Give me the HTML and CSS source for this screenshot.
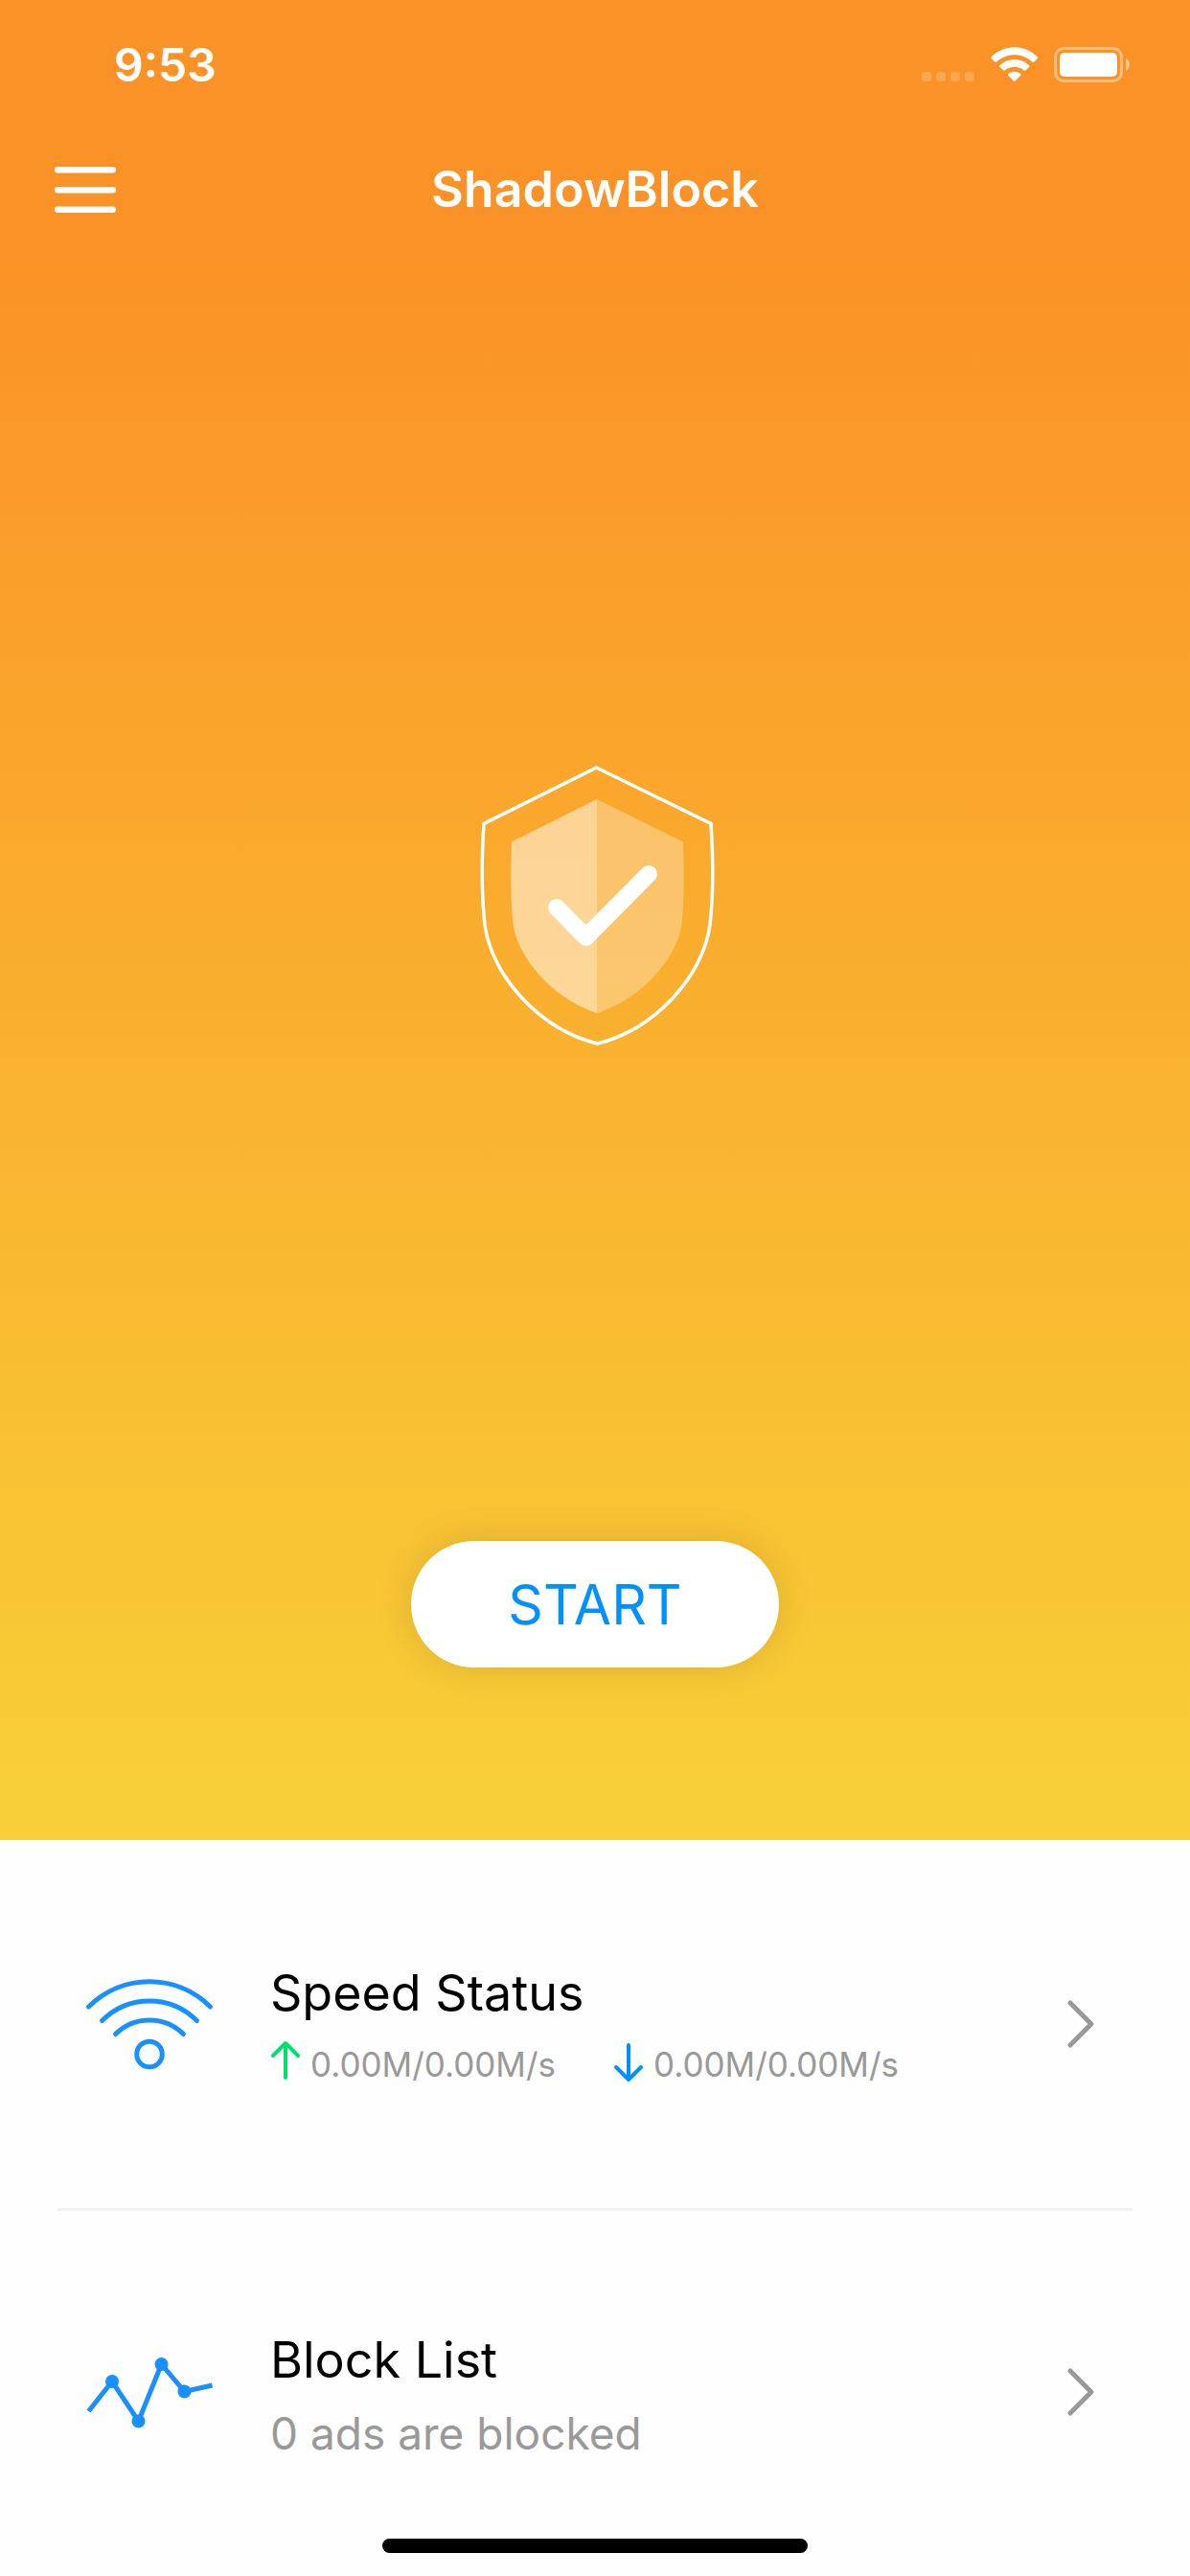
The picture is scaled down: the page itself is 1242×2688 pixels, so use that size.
FILE: index.html
```html
<!DOCTYPE html>
<html lang="en">
<head>
    <meta charset="UTF-8">
    <meta name="viewport" content="width=device-width, initial-scale=1.0">
    <title>ShadowBlock</title>
    <link rel="stylesheet" href="styles.css">
</head>
<body>
    <main class="hero">
        <div class="status-bar">
            <span class="time">9:53</span>
            <div class="status-icons">
                <svg width="56" height="37" viewBox="0 0 56 37" fill="#fff" fill-opacity="0.2" aria-hidden="true">
                    <rect x="0" y="26" width="10" height="10" rx="3"/>
                    <rect x="15" y="26" width="10" height="10" rx="3"/>
                    <rect x="30" y="26" width="10" height="10" rx="3"/>
                    <rect x="45" y="26" width="10" height="10" rx="3"/>
                </svg>
                <svg width="50" height="37" viewBox="0 0 50 37" fill="#fff" aria-hidden="true">
                    <path d="M0.5 10.5 Q0 11.2 0.6 11.9 L4.4 15.7 Q5.2 16.4 6 15.7 C16.5 5.6 33 5.6 43.5 15.7 Q44.3 16.4 45.1 15.7 L48.9 11.9 Q49.5 11.2 49 10.5 C35.5 -3.3 14 -3.3 0.5 10.5Z"/>
                    <path d="M9.3 19.2 Q8.7 20 9.3 20.7 L13.2 24.5 Q14 25.2 14.8 24.5 C20.5 19.5 29 19.5 34.7 24.5 Q35.5 25.2 36.3 24.5 L40.2 20.7 Q40.8 20 40.2 19.2 C31.5 11 18 11 9.3 19.2Z"/>
                    <path d="M18.3 28 Q17.5 29 18.3 29.8 L24 35.5 Q24.75 36.2 25.5 35.5 L31.2 29.8 Q32 29 31.2 28 C27.5 25 22 25 18.3 28Z"/>
                </svg>
                <svg width="80" height="37" viewBox="0 0 80 37" aria-hidden="true">
                    <rect x="1.5" y="1.5" width="69" height="34" rx="9" fill="none" stroke="#fff" stroke-opacity="0.4" stroke-width="3"/>
                    <rect x="6" y="6" width="60" height="25" rx="5" fill="#fff"/>
                    <path d="M75 12 C80 14 80 23 75 25Z" fill="#fff" fill-opacity="0.5"/>
                </svg>
            </div>
        </div>

        <header class="nav-bar">
            <button class="menu-button" type="button" aria-label="Menu">
                <svg width="64" height="48" viewBox="0 0 64 48" fill="#fff" aria-hidden="true">
                    <rect x="0" y="0" width="64" height="6.5" rx="3.2"/>
                    <rect x="0" y="21" width="64" height="6.5" rx="3.2"/>
                    <rect x="0" y="41.5" width="64" height="6.5" rx="3.2"/>
                </svg>
            </button>
            <h1>ShadowBlock</h1>
        </header>

        <div class="shield">
            <svg width="246" height="294" viewBox="18 18 246 294" aria-hidden="true">
                <path d="M142.5 21 L262 79.500 C264 110 265 150 261 185 C254 238 204 294 143.5 309 C83 294 33 238 26 185 C22 150 23 110 25 79.5Z" fill="none" stroke="#fff" stroke-width="3.5"/>
                <path d="M143 54 L54 98.5 C53 130 52.5 165 56.5 190 C62 215 89 258 143 277.5Z" fill="#fff" fill-opacity="0.5"/>
                <path d="M143 54 L233 98.5 C234 130 234.5 165 230.5 190 C225 215 198 258 143 277.5Z" fill="#fff" fill-opacity="0.3"/>
                <path d="M101 167 L131.5 198 L197 132" fill="none" stroke="#fff" stroke-width="18" stroke-linecap="round" stroke-linejoin="round"/>
            </svg>
        </div>

        <button class="start-button" type="button">START</button>
    </main>

    <nav class="list">
        <a class="row" href="#speed">
            <svg class="row-icon" width="132" height="84" viewBox="0 5 132 84" fill="none" stroke="#1890ff" stroke-width="5" stroke-linecap="round" aria-hidden="true">
                <path d="M2.5 29 C38 -6 94 -6 129.5 29"/>
                <path d="M16.5 43.5 C44 16 88 16 115.5 43.5"/>
                <path d="M30.5 57.5 C50 38 82 38 101.5 57.5"/>
                <circle cx="66" cy="78.5" r="13.3"/>
            </svg>
            <div class="row-text">
                <h2>Speed Status</h2>
                <div class="speeds">
                    <span class="speed">
                        <svg width="32" height="42" viewBox="0 0 32 42" fill="none" stroke="#00e06c" stroke-width="4" stroke-linecap="round" stroke-linejoin="round" aria-hidden="true">
                            <path d="M16 40 V4 M3 17 L16 4 L29 17"/>
                        </svg>
                        0.00M/0.00M/s
                    </span>
                    <span class="speed">
                        <svg width="32" height="42" viewBox="0 0 32 42" fill="none" stroke="#0090ff" stroke-width="4" stroke-linecap="round" stroke-linejoin="round" aria-hidden="true">
                            <path d="M16 6 V42 M3 29 L16 42 L29 29"/>
                        </svg>
                        0.00M/0.00M/s
                    </span>
                </div>
            </div>
            <svg class="chevron" width="28" height="50" viewBox="0 0 28 50" aria-hidden="true">
                <path d="M3 3 L25 25 L3 47"/>
            </svg>
        </a>
        <a class="row" href="#blocklist">
            <svg class="row-icon" width="132" height="84" viewBox="0 0 132 84" fill="#1890ff" aria-hidden="true">
                <path d="M2.5 62 L27 31 L54.5 72.5 L78.5 13 L102.5 41.5 L131.5 35" fill="none" stroke="#1890ff" stroke-width="5"/>
                <circle cx="27" cy="31" r="7"/>
                <circle cx="54.5" cy="72.5" r="7"/>
                <circle cx="78.5" cy="13" r="7"/>
                <circle cx="102.5" cy="41.5" r="7"/>
            </svg>
            <div class="row-text">
                <h2>Block List</h2>
                <p>0 ads are blocked</p>
            </div>
            <svg class="chevron" width="28" height="50" viewBox="0 0 28 50" aria-hidden="true">
                <path d="M3 3 L25 25 L3 47"/>
            </svg>
        </a>
    </nav>
    <div class="home-indicator"></div>
</body>
</html>
```
FILE: styles.css
```css
* {
    box-sizing: border-box;
}
body {
    margin: 0;
    min-height: 100vh;
    display: flex;
    flex-direction: column;
    font-family: Inter, "Liberation Sans", sans-serif;
    background-color: #fefefe;
    color: #000;
}
h1, h2, p {
    margin: 0;
}
svg {
    display: block;
    flex-shrink: 0;
    overflow: visible;
}
button {
    border: none;
    padding: 0;
    font-family: inherit;
    cursor: pointer;
}

/* Top area */
.hero {
    flex: 1;
    display: flex;
    flex-direction: column;
    align-items: center;
    padding-bottom: 180px;
    background: linear-gradient(#fb9227 264px, #f8d037);
    color: #fff;
}
.status-bar {
    align-self: stretch;
    height: 132px;
    display: flex;
    justify-content: space-between;
    align-items: center;
    padding: 3px 62px 0 119px;
}
.time {
    font-size: 48px;
    font-weight: 600;
}
.status-icons {
    display: flex;
    gap: 16px;
}
.nav-bar {
    align-self: stretch;
    height: 132px;
    display: grid;
    grid-template-columns: 1fr auto 1fr;
    align-items: center;
    padding: 0 57px;
}
.menu-button {
    justify-self: start;
    background: none;
}
.nav-bar h1 {
    font-size: 52px;
    font-weight: 600;
    padding-bottom: 2px;
}
.shield {
    flex: 1;
    display: flex;
    align-items: center;
    padding-top: 18px;
}
.start-button {
    width: 384px;
    height: 132px;
    border-radius: 66px;
    background-color: #fff;
    color: #0090ff;
    font-size: 57px;
    box-shadow: 0 0 40px rgba(0, 0, 0, 0.12);
}

/* Bottom list */
.row {
    display: flex;
    align-items: center;
    height: 384px;
    margin: 0 60px;
    padding: 0 40px 0 30px;
    color: inherit;
    text-decoration: none;
}
.row + .row {
    border-top: 3px solid #f1f1f1;
    padding-bottom: 3px;
}
.row-text {
    flex: 1;
    margin-left: 60px;
    padding-top: 10px;
}
.row h2 {
    font-size: 52px;
    font-weight: 400;
    line-height: 64px;
}
.row p {
    margin-top: 12px;
    font-size: 46px;
    line-height: 64px;
    color: #999;
}
.speeds {
    display: flex;
    gap: 60px;
    margin-top: 16px;
    padding-bottom: 6px;
}
.speed {
    display: flex;
    align-items: flex-start;
    gap: 10px;
    font-size: 35px;
    line-height: 52px;
    color: #999;
}
.chevron {
    fill: none;
    stroke: #999;
    stroke-width: 5;
    stroke-linecap: round;
    stroke-linejoin: round;
}
.home-indicator {
    position: fixed;
    left: 50%;
    bottom: 24px;
    width: 444px;
    height: 15px;
    border-radius: 8px;
    background-color: #000;
    transform: translateX(-50%);
}
```
